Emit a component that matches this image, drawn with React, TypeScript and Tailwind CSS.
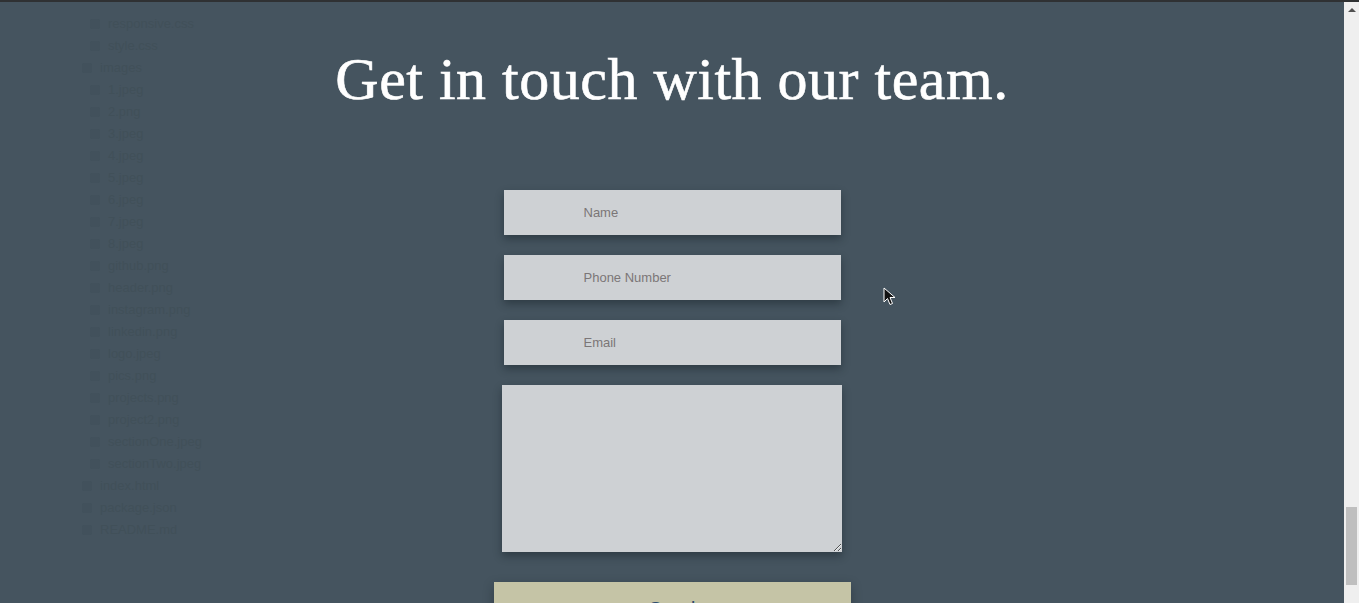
import React from "react";

const ghostFiles = [
  { name: "responsive.css", indent: true },
  { name: "style.css", indent: true },
  { name: "images", indent: false },
  { name: "1.jpeg", indent: true },
  { name: "2.png", indent: true },
  { name: "3.jpeg", indent: true },
  { name: "4.jpeg", indent: true },
  { name: "5.jpeg", indent: true },
  { name: "6.jpeg", indent: true },
  { name: "7.jpeg", indent: true },
  { name: "8.jpeg", indent: true },
  { name: "github.png", indent: true },
  { name: "header.png", indent: true },
  { name: "instagram.png", indent: true },
  { name: "linkedin.png", indent: true },
  { name: "logo.jpeg", indent: true },
  { name: "pics.png", indent: true },
  { name: "projects.png", indent: true },
  { name: "project2.png", indent: true },
  { name: "sectionOne.jpeg", indent: true },
  { name: "sectionTwo.jpeg", indent: true },
  { name: "index.html", indent: false },
  { name: "package.json", indent: false },
  { name: "README.md", indent: false },
];

// faint file tree bleeding through the page background
function GhostTree() {
  return (
    <div className="pointer-events-none absolute left-0 top-[2px] w-[260px] pt-[9px] font-['Liberation_Sans',sans-serif] text-[13px] text-[#415059]">
      {ghostFiles.map((f) => (
        <div
          key={f.name}
          className={`flex h-[22px] items-center gap-[8px] ${f.indent ? "pl-[90px]" : "pl-[82px]"}`}
        >
          <span className="h-[10px] w-[10px] rounded-[2px] bg-[#42515c]" />
          <span>{f.name}</span>
        </div>
      ))}
    </div>
  );
}

function Field({ placeholder }: { placeholder: string }) {
  return (
    <input
      type="text"
      placeholder={placeholder}
      className="h-[45px] w-[337px] bg-[#ced1d4] pl-[80px] font-['Liberation_Sans',sans-serif] text-[13px] text-[#555] shadow-[0_4px_8px_rgba(20,30,38,0.45)] outline-none placeholder:text-[#7b7677]"
    />
  );
}

function Cursor() {
  return (
    <svg
      className="pointer-events-none absolute left-[883px] top-[285px]"
      width="14"
      height="20"
      viewBox="0 0 14 20"
    >
      <path
        d="M1 1 L1 15 L4.5 11.5 L7 17.5 L9.5 16.5 L7 10.5 L12 10.5 Z"
        fill="#111"
        stroke="#fff"
        strokeWidth="1"
        strokeLinejoin="round"
      />
    </svg>
  );
}

export default function App() {
  return (
    <div className="flex h-[603px] w-full flex-col overflow-hidden bg-[#45545f]">
      <div className="h-[2px] w-full bg-[#2f3133]" />
      <div className="flex min-h-0 flex-1">
        <main className="relative flex flex-1 flex-col items-center overflow-hidden">
          <GhostTree />
          <h1 className="relative mt-[42px] font-['Liberation_Serif',serif] text-[60px] font-normal leading-[70px] tracking-[0.5px] text-white [-webkit-text-stroke:0.6px_white]">
            Get in touch with our team.
          </h1>
          <form className="relative mt-[76px] flex flex-col items-center">
            <div className="flex flex-col gap-[20px]">
              <Field placeholder="Name" />
              <Field placeholder="Phone Number" />
              <Field placeholder="Email" />
            </div>
            <textarea className="mt-[20px] h-[167px] w-[340px] bg-[#ced1d4] shadow-[0_4px_8px_rgba(20,30,38,0.45)] outline-none" />
            <button
              type="button"
              className="mt-[30px] h-[50px] w-[357px] bg-[#c5c4a6] pt-[3px] font-['Liberation_Sans',sans-serif] text-[20px] text-[#2d4d6e] shadow-[0_4px_10px_rgba(20,30,38,0.4)]"
            >
              Send
            </button>
          </form>
          <Cursor />
        </main>
        <aside className="flex w-[15px] flex-col items-center bg-[#efefef]">
          <div className="mt-[6px] h-0 w-0 border-x-[4px] border-b-[4px] border-x-transparent border-b-[#505050]" />
          <div className="mt-[495px] h-[78px] w-[11px] bg-[#bfbfbf]" />
        </aside>
      </div>
    </div>
  );
}
